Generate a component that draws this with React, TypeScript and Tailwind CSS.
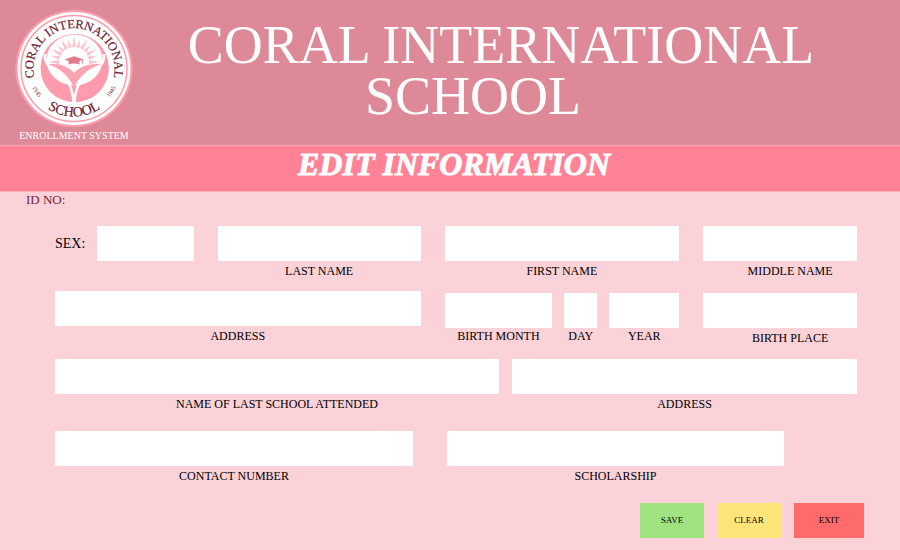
import type { ReactNode } from "react";

const RAY_ANGLES = [-90, -75, -60, -45, -30, -15, 0, 15, 30, 45, 60, 75, 90];

function SchoolLogo() {
  return (
    <svg viewBox="0 0 120 120" className="size-[120px]" role="img" aria-label="Coral International School">
      <defs>
        <path id="seal-top" d="M21.5 73.3 A40.5 40.5 0 1 1 98.5 73.3" />
        <path id="seal-bottom" d="M11.5 60 A48.5 48.5 0 0 0 108.5 60" />
        <path id="seal-year" d="M14 60 A46 46 0 0 0 106 60" />
      </defs>
      <circle cx="60" cy="60.5" r="58.7" fill="#ff9bac" />
      <circle cx="60" cy="60.5" r="56.5" fill="#fff" />
      <circle cx="60" cy="60.5" r="53" fill="#fff" stroke="#ff9bac" strokeWidth="1.5" />

      <circle cx="60.7" cy="60" r="34.2" fill="#ff9bac" />
      <ellipse cx="60.5" cy="52" rx="28" ry="25.5" fill="#fff" />
      {RAY_ANGLES.map((angle, i) => (
        <path
          key={angle}
          d={i % 2 === 0 ? "M60 28 L61.9 39 L58.1 39 Z" : "M60 31 L61.9 39 L58.1 39 Z"}
          fill="#ffc3cd"
          transform={`rotate(${angle} 60 54)`}
        />
      ))}
      <path
        d="M31 46 C30 69 57 56 59.5 94 M90 46 C91 69 63 56 60.5 94"
        fill="none"
        stroke="#fff"
        strokeWidth="2.6"
      />
      <path
        d="M34.5 56.5 C46 54.5 56 60 60 65 C64 60 75 54.5 86.5 56.5 C75 60 64 69 60 80 C56 69 46 60 34.5 56.5 Z"
        fill="#ffa3b2"
      />
      <path
        d="M50.5 51.5 L60 48.3 L69.5 51.5 L65.5 53 V56.5 Q60 54.5 54.5 56.5 V53 Z"
        fill="#e57c8e"
      />
      <path d="M68.6 51.5 V55.5" stroke="#e57c8e" strokeWidth="1" />

      <g fill="#702035" textAnchor="middle" fontFamily="'Liberation Serif', serif">
        <text fontSize="12.5" stroke="#702035" strokeWidth="0.2">
          <textPath href="#seal-top" startOffset="50%">CORAL INTERNATIONAL</textPath>
        </text>
        <text fontSize="14" stroke="#702035" strokeWidth="0.2">
          <textPath href="#seal-bottom" startOffset="50%">SCHOOL</textPath>
        </text>
        <text fontSize="6">
          <textPath href="#seal-year" startOffset="18%">1945</textPath>
        </text>
        <text fontSize="6">
          <textPath href="#seal-year" startOffset="82%">1945</textPath>
        </text>
      </g>
    </svg>
  );
}

type FieldProps = {
  id: string;
  label: string;
  labelClass?: string;
};

function Field({ id, label, labelClass = "leading-5" }: FieldProps) {
  return (
    <div className="flex min-w-0 flex-col">
      <input id={id} name={id} type="text" className="h-[35px] w-full bg-white px-2 text-sm outline-none" />
      <label htmlFor={id} className={`whitespace-nowrap text-center text-xs ${labelClass}`}>
        {label}
      </label>
    </div>
  );
}

function ActionButton({ className, type, children }: { className: string; type: "submit" | "reset" | "button"; children: ReactNode }) {
  return (
    <button type={type} className={`h-[35px] text-[9px] ${className}`}>
      {children}
    </button>
  );
}

export default function App() {
  return (
    <div className="min-h-screen bg-[#fbd2d8] font-['Liberation_Serif',serif] text-black">
      <header className="flex border-b border-[#ffa9b8] bg-[#dd8997] pb-px text-white">
        <div className="ml-3.5 flex shrink-0 flex-col items-center pt-2">
          <SchoolLogo />
          <p className="text-[10px] leading-4">ENROLLMENT SYSTEM</p>
        </div>
        <h1 className="flex-1 pt-5 pr-8 text-center text-[54px] leading-[51px]">
          CORAL INTERNATIONAL
          <span className="block pr-14">SCHOOL</span>
        </h1>
      </header>

      <h2 className="border-b border-[#fdaebb] bg-[#ff8296] pb-[9px] pl-2 text-center text-[32px] leading-9 font-bold text-white italic [-webkit-text-stroke:1px_white]">
        EDIT INFORMATION
      </h2>

      <main>
        <p className="pl-[26px] text-[13px] leading-4 text-[#762238]">ID NO:</p>

        <form className="mt-[18px]" onSubmit={(event) => event.preventDefault()}>
          <div className="pr-[43px] pl-[55px]">
            <div className="grid grid-cols-[366fr_235fr_154fr] gap-x-6">
              <div className="grid grid-cols-[139fr_203fr] gap-x-6">
                <div className="flex h-[35px] min-w-0 items-center gap-3">
                  <label htmlFor="sex" className="text-sm">
                    SEX:
                  </label>
                  <input id="sex" name="sex" type="text" className="h-full min-w-0 flex-1 bg-white px-2 text-sm outline-none" />
                </div>
                <Field id="last-name" label="LAST NAME" />
              </div>
              <Field id="first-name" label="FIRST NAME" />
              <Field id="middle-name" label="MIDDLE NAME" labelClass="pl-5 leading-5" />
            </div>

            <div className="mt-2.5 grid grid-cols-[366fr_235fr_154fr] gap-x-6">
              <Field id="address" label="ADDRESS" />
              <div className="grid grid-cols-[108fr_33fr_70fr] gap-x-3 pt-0.5">
                <Field id="birth-month" label="BIRTH MONTH" labelClass="leading-4" />
                <Field id="birth-day" label="DAY" labelClass="leading-4" />
                <Field id="birth-year" label="YEAR" labelClass="leading-4" />
              </div>
              <div className="pt-0.5">
                <Field id="birth-place" label="BIRTH PLACE" labelClass="pl-5 leading-5" />
              </div>
            </div>

            <div className="mt-[11px] grid grid-cols-[444fr_345fr] gap-x-[13px]">
              <Field id="last-school" label="NAME OF LAST SCHOOL ATTENDED" />
              <Field id="school-address" label="ADDRESS" />
            </div>

            <div className="mt-[17px] grid grid-cols-[358fr_337fr] gap-x-[34px] pr-[73px]">
              <Field id="contact-number" label="CONTACT NUMBER" />
              <Field id="scholarship" label="SCHOLARSHIP" />
            </div>
          </div>

          <div className="mt-[17px] flex justify-end gap-[13px] pr-9">
            <ActionButton type="submit" className="w-16 bg-[#9fe481]">
              SAVE
            </ActionButton>
            <ActionButton type="reset" className="w-16 bg-[#ffe479]">
              CLEAR
            </ActionButton>
            <ActionButton type="button" className="w-[70px] bg-[#ff6b6b]">
              EXIT
            </ActionButton>
          </div>
        </form>
      </main>
    </div>
  );
}
